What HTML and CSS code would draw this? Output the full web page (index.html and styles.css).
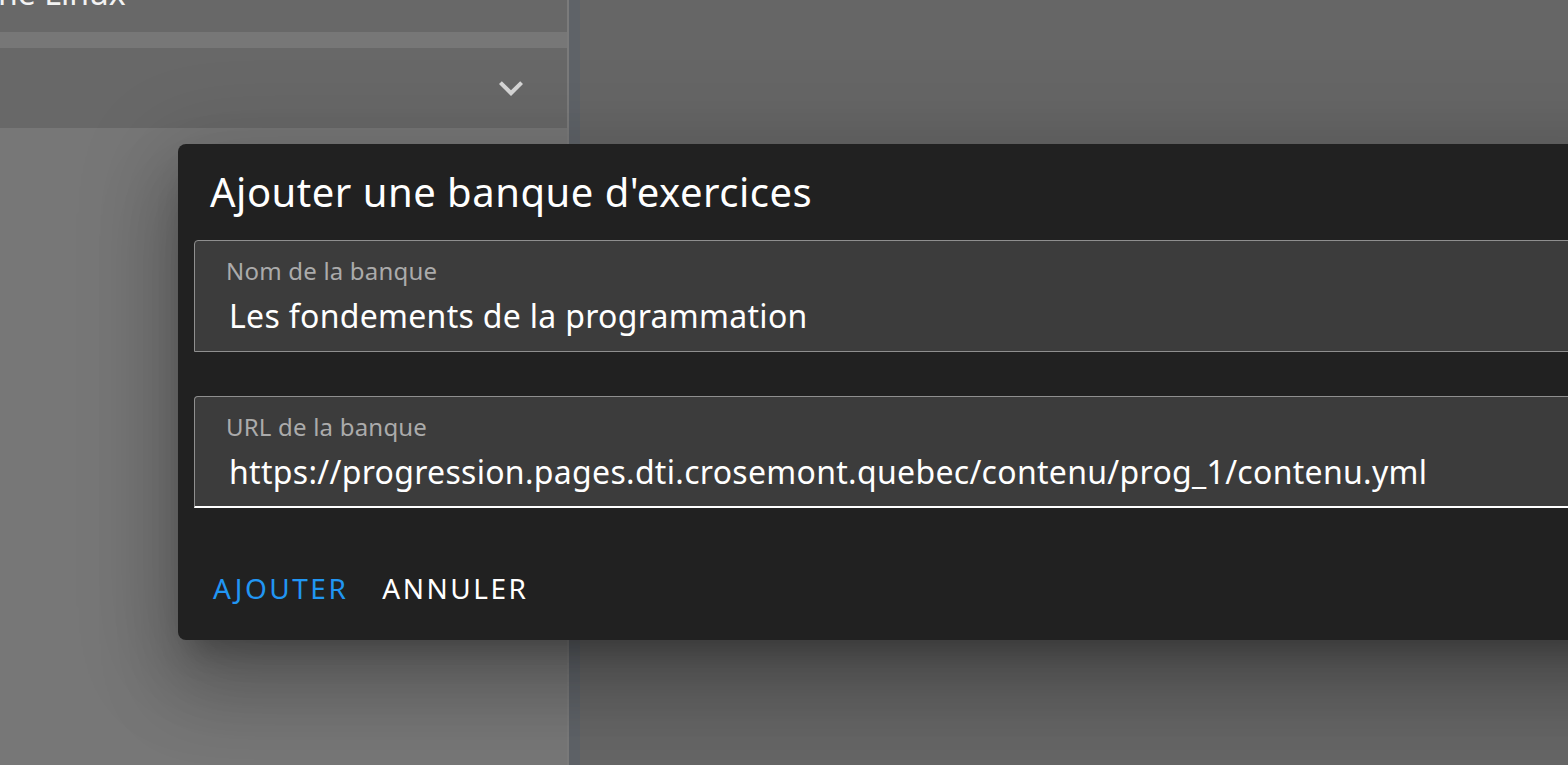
FILE: index.html
```html
<!DOCTYPE html>
<html lang="fr">
<head>
<meta charset="utf-8">
<title>Ajouter une banque d'exercices</title>
<link rel="stylesheet" href="styles.css">
</head>
<body>
<div class="app">
  <aside class="sidebar">
    <div class="item item-top"><span class="item-title">ne Linux</span></div>
    <div class="item item-select">
      <svg class="chevron" viewBox="0 0 24 24" width="48" height="48" aria-hidden="true"><path d="M7.41,8.58L12,13.17L16.59,8.58L18,10L12,16L6,10L7.41,8.58Z"/></svg>
    </div>
  </aside>
  <div class="divider"></div>
  <div class="rail"></div>
  <main class="main"></main>
</div>

<div class="dialog" role="dialog">
  <div class="dialog-title">Ajouter une banque d'exercices</div>
  <div class="dialog-body">
    <div class="field">
      <div class="field-box">
        <label class="field-label">Nom de la banque</label>
        <div class="field-value">Les fondements de la programmation</div>
      </div>
      <div class="field-details"></div>
    </div>
    <div class="field field-focused">
      <div class="field-box">
        <label class="field-label">URL de la banque</label>
        <div class="field-value">https://progression.pages.dti.crosemont.quebec/contenu/prog_1/contenu.yml</div>
      </div>
      <div class="field-details"></div>
    </div>
  </div>
  <div class="dialog-actions">
    <button class="btn btn-primary">Ajouter</button>
    <button class="btn">Annuler</button>
  </div>
</div>
</body>
</html>
```

FILE: styles.css
```css
html, body {
  margin: 0;
  padding: 0;
  height: 100%;
  overflow: hidden;
  background: #666666;
  font-family: "Noto Sans", "Open Sans", sans-serif;
}

.app {
  display: flex;
  height: 765px;
}

.sidebar {
  width: 567px;
  background: #777777;
  display: flex;
  flex-direction: column;
  gap: 16px;
}

.item {
  background: #686868;
  overflow: hidden;
}

.item-top {
  height: 32px;
}

.item-title {
  display: block;
  margin-top: -31px;
  margin-left: -2px;
  font-size: 32px;
  line-height: 48px;
  color: #f2f2f2;
  white-space: nowrap;
}

.item-select {
  height: 80px;
  display: flex;
  align-items: center;
  justify-content: flex-end;
  padding-right: 32px;
}

.chevron {
  fill: #d6d6d6;
}

.divider {
  width: 2px;
  background: #7b7b7b;
}

.rail {
  width: 11px;
  background: #5f6368;
}

.main {
  flex: 1;
  background: #666666;
}

.dialog {
  position: absolute;
  left: 178px;
  top: 144px;
  width: 1480px;
  background: #212121;
  border-radius: 8px;
  box-shadow:
    0 22px 30px -14px rgba(0, 0, 0, 0.25),
    0 48px 76px 6px rgba(0, 0, 0, 0.18),
    0 18px 92px 16px rgba(0, 0, 0, 0.15);
  color: #ffffff;
}

.dialog-title {
  padding: 16px 32px;
  font-size: 40px;
  line-height: 64px;
  letter-spacing: 0.5px;
  white-space: nowrap;
}

.dialog-body {
  padding: 0 0 0 16px;
}

.field-box {
  height: 112px;
  box-sizing: border-box;
  background: #3c3c3c;
  border: 1px solid #8f8f8f;
  border-radius: 4px 4px 0 0;
  padding: 0 31px;
  display: flex;
  flex-direction: column;
}

.field-focused .field-box {
  border-bottom: 2px solid #ffffff;
}

.field-label {
  display: block;
  margin-top: 12px;
  font-size: 24px;
  line-height: 36px;
  letter-spacing: 0.2px;
  color: #ababab;
  white-space: nowrap;
}

.field-value {
  margin-top: 3px;
  margin-left: 3px;
  font-size: 32px;
  line-height: 48px;
  letter-spacing: 0.3px;
  color: #ffffff;
  white-space: nowrap;
}

.field-details {
  height: 44px;
}

.dialog-actions {
  display: flex;
  align-items: center;
  gap: 2px;
  padding: 0 16px 16px 19px;
}

.btn {
  height: 72px;
  padding: 0 16px;
  background: transparent;
  border: none;
  color: #ffffff;
  font-family: "Noto Sans", "Open Sans", sans-serif;
  font-size: 28px;
  letter-spacing: 2.5px;
  text-transform: uppercase;
  cursor: pointer;
}

.btn-primary {
  color: #2196f3;
}
```
